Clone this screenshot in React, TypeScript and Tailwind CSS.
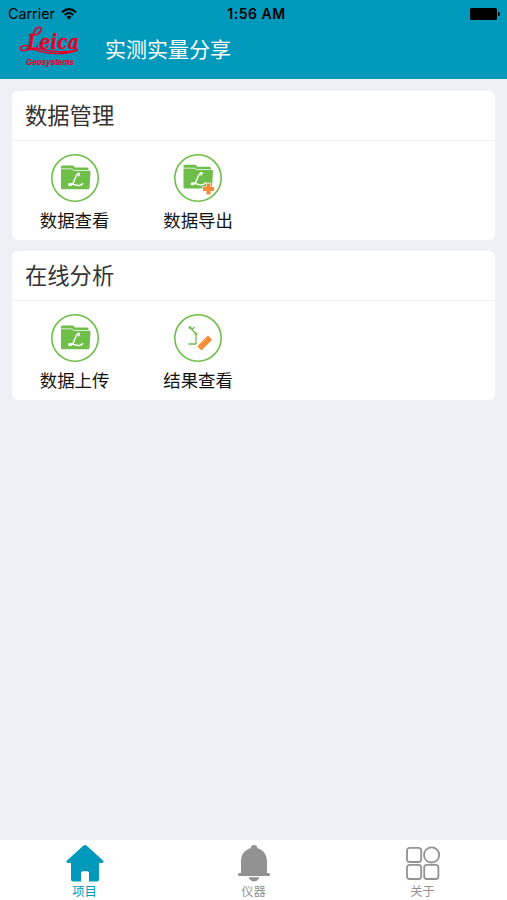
import React from "react";

const cjk = "font-['Inter','Noto_Sans_CJK_SC',sans-serif]";

function LeicaLogo() {
  return (
    <svg className="overflow-visible" width="62" height="42" viewBox="0 0 62 42" fill="#e4002b" stroke="#e4002b">
      <text x="8" y="20.5" fontFamily="DejaVu Serif, serif" fontStyle="italic" fontWeight="700" fontSize="20" textLength="52" lengthAdjust="spacingAndGlyphs" strokeWidth=".3">Leica</text>
      <path d="M14 7C15 2 18-1 21-.5C24 1 21 5 17 7" fill="none" strokeWidth="1.7" strokeLinecap="round" />
      <path d="M9 18.5C4 16 0 19 2 22C6 24.5 10 19.5 17 22C28 26 45 27.5 59 22C45 25 30 23.5 17 20" fill="none" strokeWidth="1.5" strokeLinecap="round" />
      <text x="7" y="37" fontFamily="Liberation Sans, sans-serif" fontStyle="italic" fontWeight="700" fontSize="8.5" textLength="48" lengthAdjust="spacingAndGlyphs" strokeWidth=".2">Geosystems</text>
    </svg>
  );
}

function Folder({ plus = false }: { plus?: boolean }) {
  return (
    <svg width="48" height="48" viewBox="0 0 48 48">
      <circle cx="24" cy="24" r="23.2" fill="#fff" stroke="#6fbe49" strokeWidth="1.6" />
      <g transform={plus ? "translate(-0.5 -0.7)" : undefined}>
        <path d="M10 14.5V13q0-1.5 1.5-1.5h10q1.2 0 1.8 1.4l.4.6H36q1.5 0 1.5 1.5v1H23l-2-1.5H10Z" fill="#6fbe49" />
        <path d="M10 15.2h11l2 1.6h15.5q1 0 1 1L38.5 34q0 1.2-1.5 1.2H11.5Q10 35.2 10 34Z" fill="#6fbe49" />
        <path d="M27.5 21.7q2-2.5.3-2.4c-3.4.3-3.8 8.2-6.5 11-1.4 1.4-3.7 1.3-3.5.2.4-1.8 4.7 0 8 .8 2.4.6 4.8 0 6-1.8" fill="none" stroke="#fff" strokeWidth="1.4" strokeLinecap="round" />
      </g>
      {plus && <path d="M34.5 28.7v12.6M28.2 35h12.6" stroke="#fff" strokeWidth="5" />}
      {plus && <path d="M34.5 29.5v11M29 35h11" stroke="#f58b32" strokeWidth="4" />}
    </svg>
  );
}

function Result() {
  return (
    <svg width="48" height="48" viewBox="0 0 48 48" fill="none">
      <circle cx="24" cy="24" r="23.2" stroke="#6fbe49" strokeWidth="1.6" />
      <path d="M16 13.5l6.3 6.8M18 15.5l2.5-2.5M22 20.5v9.5M14.5 30H22" stroke="#6fbe49" strokeWidth="1.3" />
      <circle cx="16" cy="13.5" r="1.5" fill="#6fbe49" />
      <circle cx="22" cy="20" r="1.4" fill="#6fbe49" />
      <path d="M25.4 34.4L36 23.6" stroke="#f58b32" strokeWidth="5.8" />
      <path d="m25 31.2 1.7 1.7m.3-3.7 1.4 1.4m.6-3.4 1.7 1.7m.3-3.7 1.4 1.4" stroke="#ffc184" strokeWidth=".7" />
    </svg>
  );
}

function Action({ icon, label }: { icon: React.ReactNode; label: string }) {
  return (
    <div className="flex w-[123.5px] flex-col items-center">
      {icon}
      <span className="mt-[7px] text-[17.4px] leading-6 text-[#111]">{label}</span>
    </div>
  );
}

function Card({ title, children }: { title: string; children: React.ReactNode }) {
  return (
    <section className="h-[149px] rounded-[6px] bg-white">
      <h2 className="h-[50px] border-b border-[#f1f2f5] pl-[13px] text-[22.3px] leading-[50px] font-normal text-[#333]">{title}</h2>
      <div className="flex pt-[13px] pl-[0.8px]">{children}</div>
    </section>
  );
}

function Tab({ icon, label, active = false }: { icon: React.ReactNode; label: string; active?: boolean }) {
  return (
    <div className={`flex flex-1 flex-col items-center pt-1 ${active ? "text-[#0099bc]" : "text-[#929292]"}`}>
      {icon}
      <span className="text-[12.3px] leading-[15px]">{label}</span>
    </div>
  );
}

export default function App() {
  return (
    <div className={`flex h-[900px] w-[507px] flex-col bg-[#eff0f5] ${cjk}`}>
      <header className="h-[79px] bg-[#0099bc]">
        <div className="grid h-[27px] grid-cols-3 items-center pr-[7px] pl-2 text-[14.3px] text-black">
          <div className="flex items-center gap-[6px]">
            <span>Carrier</span>
            <svg width="16" height="12" viewBox="0 0 16 12" fill="none" stroke="#000" strokeWidth="2">
              <path d="M1 4.2Q8-2 15 4.2M3.6 7Q8 3 12.4 7" />
              <path d="M5.4 8.8Q8 6.8 10.6 8.8L8 11.7Z" fill="#000" stroke="none" />
            </svg>
          </div>
          <span className="pl-[5px] text-center text-[14px] font-semibold tracking-[0.5px]">1:56 AM</span>
          <svg className="justify-self-end" width="30" height="12" viewBox="0 0 30 12">
            <rect width="27" height="12" rx="1.5" />
            <path d="M28 4q2 0 2 2t-2 2Z" />
          </svg>
        </div>
        <div className="flex h-[44px] items-center pl-[19px]">
          <LeicaLogo />
          <h1 className="ml-6 pt-px text-[21px] leading-[44px] font-normal text-white">实测实量分享</h1>
        </div>
      </header>
      <main className="flex flex-1 flex-col gap-[11px] px-3 pt-3">
        <Card title="数据管理">
          <Action icon={<Folder />} label="数据查看" />
          <Action icon={<Folder plus />} label="数据导出" />
        </Card>
        <Card title="在线分析">
          <Action icon={<Folder />} label="数据上传" />
          <Action icon={<Result />} label="结果查看" />
        </Card>
      </main>
      <nav className="flex h-[60px] bg-white">
        <Tab
          active
          label="项目"
          icon={
            <svg width="40" height="40" viewBox="0 0 40 40" fill="currentColor">
              <path d="M18.3 1.7q1.7-1.5 3.4 0L38 16.5q2 2.3-1.5 2.5H34v16.5q0 2-2 2h-8V29q0-1.7-1.7-1.7h-4.6Q16 27.3 16 29v8.5H8q-2 0-2-2V19H3.5Q0 18.8 2 16.5Z" />
            </svg>
          }
        />
        <Tab
          label="仪器"
          icon={
            <svg width="40" height="40" viewBox="0 0 40 40" fill="currentColor">
              <path d="M20 1q2.8 0 3.5 3.2C30 6 33 11 33 18v11h2q1 0 1 1.5T35 32H5q-1 0-1-1.5T5 29h2V18C7 11 10 6 16.5 4.2Q17.2 1 20 1Z" />
              <path d="M14.5 33.3h11Q23.5 37.5 20 37.5t-5.5-4.2Z" />
            </svg>
          }
        />
        <Tab
          label="关于"
          icon={
            <svg width="40" height="40" viewBox="0 0 40 40" fill="none" stroke="currentColor" strokeWidth="1.8">
              <rect x="4" y="3.8" width="14.2" height="14.2" rx="2.8" />
              <circle cx="28.6" cy="10.9" r="7.6" />
              <rect x="4" y="20.8" width="14.2" height="14.2" rx="2.8" />
              <rect x="21.2" y="20.8" width="14.2" height="14.2" rx="2.8" />
            </svg>
          }
        />
      </nav>
    </div>
  );
}
